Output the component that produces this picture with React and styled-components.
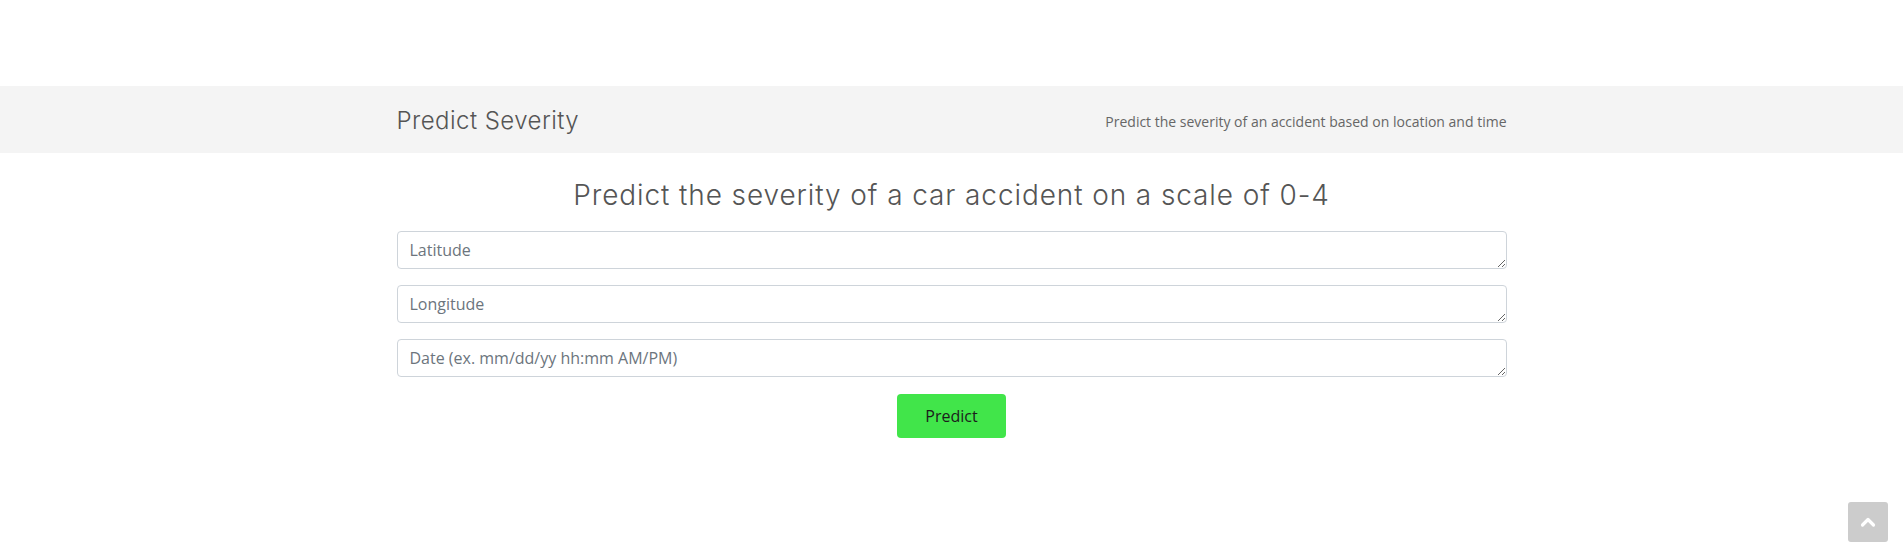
import React from "react";
import styled, { createGlobalStyle } from "styled-components";

const Global = createGlobalStyle`
  html, body { margin: 0; padding: 0; background: #fff; }
  body { font-family: "Open Sans", "Liberation Sans", sans-serif; color: #212529; }
  * { box-sizing: border-box; }
`;

const TopSpace = styled.header`
  height: 86px;
`;

const Band = styled.section`
  background: #f4f4f4;
  height: 67px;
`;

const Container = styled.div`
  width: 1110px;
  margin: 0 auto;
`;

const BandInner = styled(Container)`
  height: 100%;
  display: flex;
  align-items: center;
  justify-content: space-between;
`;

const PageTitle = styled.h2`
  margin: 0;
  font-family: Inter, "Liberation Sans", sans-serif;
  font-weight: 300;
  font-size: 24px;
  letter-spacing: 0.45px;
  color: #555;
  padding-top: 2px;
`;

const Crumb = styled.div`
  font-family: "Open Sans", sans-serif;
  font-size: 14px;
  color: #666;
  padding-top: 4px;
`;

const Heading = styled.h3`
  margin: 26px 0 18px;
  text-align: center;
  font-family: Inter, "Liberation Sans", sans-serif;
  font-weight: 300;
  font-size: 28px;
  letter-spacing: 0.9px;
  line-height: 1.2;
  color: #555;
`;

const Form = styled.form`
  display: flex;
  flex-direction: column;
  align-items: center;
`;

const Field = styled.textarea`
  display: block;
  width: 100%;
  height: 38px;
  margin: 0 0 16px;
  padding: 6px 12px;
  font-family: "Open Sans", sans-serif;
  font-size: 16px;
  line-height: 1.5;
  color: #495057;
  background: #fff;
  border: 1px solid #ced4da;
  border-radius: 4px;
  resize: vertical;
  &::placeholder { color: #6c757d; }
`;

const Button = styled.button`
  margin-top: 1px;
  width: 109px;
  height: 44px;
  background: #41e54a;
  border: none;
  border-radius: 4px;
  font-family: "Open Sans", sans-serif;
  font-size: 16px;
  color: #1c1c1c;
  cursor: pointer;
`;

const BackTop = styled.a`
  position: fixed;
  right: 15px;
  bottom: 14px;
  width: 40px;
  height: 40px;
  border-radius: 3px;
  background: #cccccc;
  display: flex;
  align-items: center;
  justify-content: center;
`;

export default function App() {
  return (
    <>
      <Global />
      <TopSpace />
      <Band>
        <BandInner>
          <PageTitle>Predict Severity</PageTitle>
          <Crumb>Predict the severity of an accident based on location and time</Crumb>
        </BandInner>
      </Band>
      <Container>
        <Heading>Predict the severity of a car accident on a scale of 0-4</Heading>
        <Form onSubmit={(e) => e.preventDefault()}>
          <Field rows={1} placeholder="Latitude" />
          <Field rows={1} placeholder="Longitude" />
          <Field rows={1} placeholder="Date (ex. mm/dd/yy hh:mm AM/PM)" />
          <Button type="submit">Predict</Button>
        </Form>
      </Container>
      <BackTop href="#">
        <svg width="16" height="12" viewBox="0 0 16 12">
          <polyline points="2.5,9 8,3.5 13.5,9" fill="none" stroke="#fff" strokeWidth="3.2" strokeLinecap="round" strokeLinejoin="round" />
        </svg>
      </BackTop>
    </>
  );
}
